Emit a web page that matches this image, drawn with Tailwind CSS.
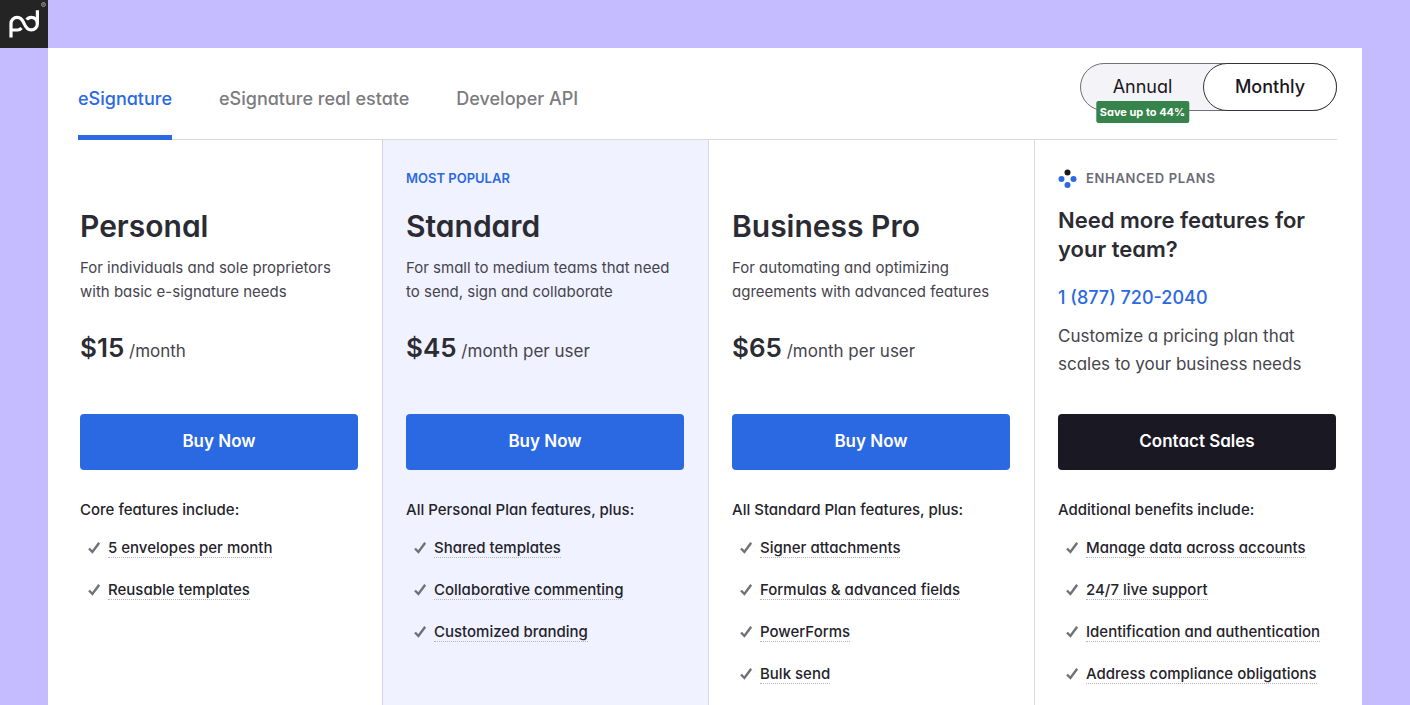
<!DOCTYPE html>
<html lang="en">
  <head>
    <meta charset="utf-8" />
    <meta name="viewport" content="width=device-width, initial-scale=1" />
    <title>eSignature plans and pricing</title>
    <script src="https://cdn.jsdelivr.net/npm/@tailwindcss/browser@4"></script>
  </head>
  <body class="min-h-screen flex flex-col bg-[#c4bcff] text-[#2b2b33] font-['Inter','Liberation_Sans',sans-serif] [font-feature-settings:'cv11'] overflow-x-hidden">
    <!-- logo -->
    <a href="#" aria-label="Home" class="block w-12 h-12 bg-[#242424]">
      <svg class="w-12 h-12" viewBox="0 0 48 48" fill="none" stroke="#fff" stroke-width="3.2">
        <path d="M11 37.500V23.500a6.200 6.200 0 0 1 6.200-6.200c3.600 0 5.400 2.500 6.900 6.200s3.400 6.400 7.100 6.400a6.200 6.200 0 0 0 6.200-6.200V10.300" />
        <path d="M11 30h6.500c1.700 0 3-.7 4-2" />
        <path d="M26.700 19.600c1-1.400 2.500-2.300 4.500-2.300a6.200 6.200 0 0 1 6.200 6.400" />
        <circle cx="43.500" cy="4.500" r="2" stroke="#a8a8a8" stroke-width=".8" />
        <path d="M42.900 5.700V3.500h.8a.6.6 0 0 1 0 1.200h-.8M43.700 4.700l.6 1" stroke="#a8a8a8" stroke-width=".5" />
      </svg>
    </a>

    <main class="grow flex flex-col mx-12 bg-white">
      <!-- tabs + billing toggle -->
      <header class="flex justify-between ml-[30px] mr-[25px] border-b border-[#d9d9de]">
        <nav class="flex gap-[47px] text-lg font-medium text-[#7b7b80]">
          <a href="#" class="-mb-px pt-[37px] pb-[22px] border-b-5 border-[#2b69e3] text-[#2b69e3]" aria-current="page">eSignature</a>
          <a href="#" class="pt-[37px]">eSignature real estate</a>
          <a href="#" class="pt-[37px]">Developer API</a>
        </nav>
        <div class="flex h-12 mt-[15px] rounded-full border border-[#6f6e7c] bg-[#f3f3f8] text-lg text-[#1a1823]">
          <label class="relative w-[123px] flex items-center justify-center cursor-pointer">
            <input type="radio" name="billing" class="sr-only" />
            Annual
            <span class="absolute top-[37px] left-1/2 -translate-x-1/2 px-1 rounded-xs bg-[#36834b] text-[11px] leading-[22px] font-bold text-white whitespace-nowrap">Save up to 44%</span>
          </label>
          <label class="-m-px w-[134px] flex items-center justify-center rounded-full border border-[#35343d] bg-white font-medium cursor-pointer">
            <input type="radio" name="billing" class="sr-only" checked />
            Monthly
          </label>
        </div>
      </header>

      <div class="grow grid grid-cols-4 pl-2 pr-0.5">
        <section class="px-6 pb-5">
          <div class="min-h-[274px] pt-7">
            <p class="h-5"></p>
            <h2 class="mt-[18px] text-3xl leading-10 font-semibold">Personal</h2>
            <p class="mt-2.5 text-[15px] leading-6 text-[#45444d]">For individuals and sole proprietors<br />with basic e-signature needs</p>
            <p class="mt-6 text-[17px] leading-10 text-[#45444d]"><strong class="text-[26px] font-semibold text-[#2b2b33]">$15</strong> /month</p>
          </div>
          <button class="w-full h-14 rounded bg-[#2b69e3] text-[17px] font-semibold text-white">Buy Now</button>
          <h3 class="mt-7 text-[15px] leading-6 font-medium text-[#24232b]">Core features include:</h3>
          <ul class="mt-4 pl-2 grid gap-[22px] text-[15px] font-medium text-[#24232b]">
            <li class="flex items-center gap-2">
              <svg class="w-3 h-3 shrink-0" viewBox="0 0 12 12" fill="none" stroke="#707078" stroke-width="2.4"><path d="M1 6.500l3.400 3.500L11.200.8" /></svg>
              <a href="#" class="leading-[19px] border-b border-dotted border-[#b5b5bb]">5 envelopes per month</a>
            </li>
            <li class="flex items-center gap-2">
              <svg class="w-3 h-3 shrink-0" viewBox="0 0 12 12" fill="none" stroke="#707078" stroke-width="2.4"><path d="M1 6.500l3.400 3.500L11.200.8" /></svg>
              <a href="#" class="leading-[19px] border-b border-dotted border-[#b5b5bb]">Reusable templates</a>
            </li>
          </ul>
        </section>

        <section class="pl-[23px] pr-6 pb-5 border-l border-[#cfd3e2] bg-[#f0f2ff]">
          <div class="min-h-[274px] pt-7">
            <p class="h-5 text-[13px] leading-5 font-semibold text-[#2b69e3]">MOST POPULAR</p>
            <h2 class="mt-[18px] text-3xl leading-10 font-semibold">Standard</h2>
            <p class="mt-2.5 text-[15px] leading-6 text-[#45444d]">For small to medium teams that need<br />to send, sign and collaborate</p>
            <p class="mt-6 text-[17px] leading-10 text-[#45444d]"><strong class="text-[26px] font-semibold text-[#2b2b33]">$45</strong> /month per user</p>
          </div>
          <button class="w-full h-14 rounded bg-[#2b69e3] text-[17px] font-semibold text-white">Buy Now</button>
          <h3 class="mt-7 text-[15px] leading-6 font-medium text-[#24232b]">All Personal Plan features, plus:</h3>
          <ul class="mt-4 pl-2 grid gap-[22px] text-[15px] font-medium text-[#24232b]">
            <li class="flex items-center gap-2">
              <svg class="w-3 h-3 shrink-0" viewBox="0 0 12 12" fill="none" stroke="#707078" stroke-width="2.4"><path d="M1 6.500l3.400 3.500L11.200.8" /></svg>
              <a href="#" class="leading-[19px] border-b border-dotted border-[#b5b5bb]">Shared templates</a>
            </li>
            <li class="flex items-center gap-2">
              <svg class="w-3 h-3 shrink-0" viewBox="0 0 12 12" fill="none" stroke="#707078" stroke-width="2.4"><path d="M1 6.500l3.400 3.500L11.200.8" /></svg>
              <a href="#" class="leading-[19px] border-b border-dotted border-[#b5b5bb]">Collaborative commenting</a>
            </li>
            <li class="flex items-center gap-2">
              <svg class="w-3 h-3 shrink-0" viewBox="0 0 12 12" fill="none" stroke="#707078" stroke-width="2.4"><path d="M1 6.500l3.400 3.500L11.200.8" /></svg>
              <a href="#" class="leading-[19px] border-b border-dotted border-[#b5b5bb]">Customized branding</a>
            </li>
          </ul>
        </section>

        <section class="pl-[23px] pr-6 pb-5 border-l border-[#d9d9de]">
          <div class="min-h-[274px] pt-7">
            <p class="h-5"></p>
            <h2 class="mt-[18px] text-3xl leading-10 font-semibold">Business Pro</h2>
            <p class="mt-2.5 text-[15px] leading-6 text-[#45444d]">For automating and optimizing<br />agreements with advanced features</p>
            <p class="mt-6 text-[17px] leading-10 text-[#45444d]"><strong class="text-[26px] font-semibold text-[#2b2b33]">$65</strong> /month per user</p>
          </div>
          <button class="w-full h-14 rounded bg-[#2b69e3] text-[17px] font-semibold text-white">Buy Now</button>
          <h3 class="mt-7 text-[15px] leading-6 font-medium text-[#24232b]">All Standard Plan features, plus:</h3>
          <ul class="mt-4 pl-2 grid gap-[22px] text-[15px] font-medium text-[#24232b]">
            <li class="flex items-center gap-2">
              <svg class="w-3 h-3 shrink-0" viewBox="0 0 12 12" fill="none" stroke="#707078" stroke-width="2.4"><path d="M1 6.500l3.400 3.500L11.200.8" /></svg>
              <a href="#" class="leading-[19px] border-b border-dotted border-[#b5b5bb]">Signer attachments</a>
            </li>
            <li class="flex items-center gap-2">
              <svg class="w-3 h-3 shrink-0" viewBox="0 0 12 12" fill="none" stroke="#707078" stroke-width="2.4"><path d="M1 6.500l3.400 3.500L11.200.8" /></svg>
              <a href="#" class="leading-[19px] border-b border-dotted border-[#b5b5bb]">Formulas &amp; advanced fields</a>
            </li>
            <li class="flex items-center gap-2">
              <svg class="w-3 h-3 shrink-0" viewBox="0 0 12 12" fill="none" stroke="#707078" stroke-width="2.4"><path d="M1 6.500l3.400 3.500L11.200.8" /></svg>
              <a href="#" class="leading-[19px] border-b border-dotted border-[#b5b5bb]">PowerForms</a>
            </li>
            <li class="flex items-center gap-2">
              <svg class="w-3 h-3 shrink-0" viewBox="0 0 12 12" fill="none" stroke="#707078" stroke-width="2.4"><path d="M1 6.500l3.400 3.500L11.200.8" /></svg>
              <a href="#" class="leading-[19px] border-b border-dotted border-[#b5b5bb]">Bulk send</a>
            </li>
          </ul>
        </section>

        <section class="pl-[23px] pr-6 pb-5 border-l border-[#d9d9de]">
          <div class="min-h-[274px] pt-7">
            <p class="h-5 flex items-center gap-2 text-[13px] leading-5 font-semibold tracking-wider text-[#6b6a78]">
              <svg class="w-5 h-5" viewBox="0 0 20 20" fill="#2b69e3">
                <circle cx="9.500" cy="4.500" r="3" fill="#1a1823" />
                <circle cx="3.500" cy="11" r="3" />
                <circle cx="15.500" cy="11" r="3" />
                <circle cx="9.500" cy="17" r="3" />
              </svg>
              ENHANCED PLANS
            </p>
            <h2 class="mt-[18px] text-[22px] leading-[29px] font-semibold">Need more features for<br />your team?</h2>
            <a href="#" class="block mt-5 text-lg leading-7 font-medium text-[#2b69e3]">1 (877) 720-2040</a>
            <p class="mt-2.5 text-[17px] leading-7 text-[#45444d]">Customize a pricing plan that<br />scales to your business needs</p>
          </div>
          <button class="w-full h-14 rounded bg-[#1a1823] text-[17px] font-semibold text-white">Contact Sales</button>
          <h3 class="mt-7 text-[15px] leading-6 font-medium text-[#24232b]">Additional benefits include:</h3>
          <ul class="mt-4 pl-2 grid gap-[22px] text-[15px] font-medium text-[#24232b]">
            <li class="flex items-center gap-2">
              <svg class="w-3 h-3 shrink-0" viewBox="0 0 12 12" fill="none" stroke="#707078" stroke-width="2.4"><path d="M1 6.500l3.400 3.500L11.200.8" /></svg>
              <a href="#" class="leading-[19px] border-b border-dotted border-[#b5b5bb]">Manage data across accounts</a>
            </li>
            <li class="flex items-center gap-2">
              <svg class="w-3 h-3 shrink-0" viewBox="0 0 12 12" fill="none" stroke="#707078" stroke-width="2.4"><path d="M1 6.500l3.400 3.500L11.200.8" /></svg>
              <a href="#" class="leading-[19px] border-b border-dotted border-[#b5b5bb]">24/7 live support</a>
            </li>
            <li class="flex items-center gap-2">
              <svg class="w-3 h-3 shrink-0" viewBox="0 0 12 12" fill="none" stroke="#707078" stroke-width="2.4"><path d="M1 6.500l3.400 3.500L11.200.8" /></svg>
              <a href="#" class="leading-[19px] border-b border-dotted border-[#b5b5bb]">Identification and authentication</a>
            </li>
            <li class="flex items-center gap-2">
              <svg class="w-3 h-3 shrink-0" viewBox="0 0 12 12" fill="none" stroke="#707078" stroke-width="2.4"><path d="M1 6.500l3.400 3.500L11.200.8" /></svg>
              <a href="#" class="leading-[19px] border-b border-dotted border-[#b5b5bb]">Address compliance obligations</a>
            </li>
          </ul>
        </section>
      </div>
    </main>
  </body>
</html>
